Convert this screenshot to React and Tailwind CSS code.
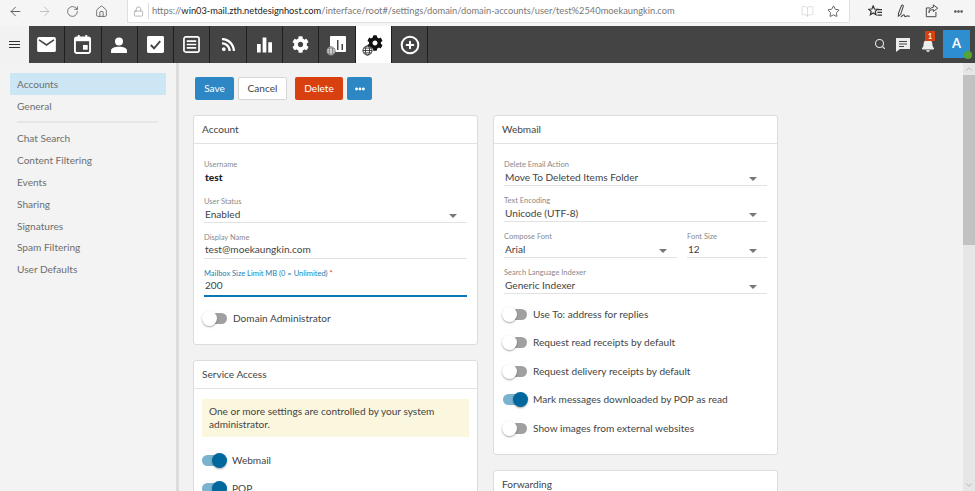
import { ArrowLeft, ArrowRight, RotateCw, Home, Lock, BookOpen, Star, Search, CirclePlus, ChevronUp, ChevronDown } from "lucide-react";
import { FaCog, FaRss, FaBell, FaEllipsisH } from "react-icons/fa";

const FONT = { fontFamily: 'Lato, "Open Sans", sans-serif' };

function Globe({ className }) {
  return (
    <svg viewBox="0 0 12 12" className={className} fill="none" stroke="currentColor" strokeWidth="0.9">
      <circle cx="6" cy="6" r="5" fill="#fff" />
      <ellipse cx="6" cy="6" rx="2.3" ry="5" />
      <path d="M1 6h10M1.8 3.4h8.4M1.8 8.6h8.4" />
    </svg>
  );
}

function MailIcon() {
  return (
    <svg viewBox="0 0 20 16" className="h-[15px] w-[19px]">
      <rect width="20" height="16" rx="2" fill="#fff" />
      <path d="M2 3l8 5.5L18 3" fill="none" stroke="#444" strokeWidth="1.6" />
    </svg>
  );
}

function CalendarIcon() {
  return (
    <svg viewBox="0 0 18 20" className="h-[19px] w-[17px]">
      <path d="M4 0h2v3H4zM12 0h2v3h-2z" fill="#fff" />
      <rect x="1" y="2.5" width="16" height="16.5" rx="2" fill="none" stroke="#fff" strokeWidth="2" />
      <rect x="1" y="2.5" width="16" height="4" fill="#fff" />
      <rect x="9.5" y="10.5" width="5" height="5" fill="#fff" />
    </svg>
  );
}

function PersonIcon() {
  return (
    <svg viewBox="0 0 18 18" className="h-[16px] w-[16px]">
      <circle cx="9" cy="5" r="4.5" fill="#fff" />
      <path d="M0 18v-2.5C0 12.5 4 11 9 11s9 1.500 9 4.500V18z" fill="#fff" />
    </svg>
  );
}

function CheckIcon() {
  return (
    <svg viewBox="0 0 18 18" className="h-[17px] w-[17px]">
      <rect width="18" height="18" rx="1.500" fill="#fff" />
      <path d="M4 9.500l3.500 3.500L14 5.500" fill="none" stroke="#444" strokeWidth="2" />
    </svg>
  );
}

function ListIcon() {
  return (
    <svg viewBox="0 0 18 18" className="h-[17px] w-[17px]">
      <rect x="1" y="1" width="16" height="16" rx="2" fill="none" stroke="#fff" strokeWidth="1.800" />
      <path d="M4 5.500h10M4 9h10M4 12.500h10" stroke="#fff" strokeWidth="1.800" />
    </svg>
  );
}

function BarsIcon() {
  return (
    <svg viewBox="0 0 16 16" className="h-[16px] w-[15px]">
      <path d="M0 7h4v9H0zM6 0h4v16H6zM12 5h4v11h-4z" fill="#fff" />
    </svg>
  );
}

function ReportGlobeIcon() {
  return (
    <span className="relative flex h-[20px] w-[20px] items-center justify-center">
      <svg viewBox="0 0 16 16" className="h-[16px] w-[16px] translate-x-[1px] translate-y-[-1px]">
        <rect width="16" height="16" rx="1" fill="#fff" />
        <path d="M7 4h1.500v10H7zM11.500 8H13v6h-1.500z" fill="#444" />
      </svg>
      <Globe className="absolute bottom-[-1px] left-[-1px] h-[10px] w-[10px] text-[#666]" />
    </span>
  );
}

function DomainGearIcon() {
  return (
    <span className="relative flex h-[20px] w-[20px] items-center justify-center">
      <FaCog className="ml-[3px] mt-[-3px] text-[16px] text-[#111]" />
      <Globe className="absolute bottom-[-1px] left-[-1px] h-[11px] w-[11px] text-[#222]" />
    </span>
  );
}

function FavoritesIcon() {
  return (
    <svg viewBox="0 0 16 14" className="h-[13px] w-[15px]" fill="none" stroke="#333" strokeWidth="1.300">
      <path d="M5.500 1l1.400 3.300 3.500.3-2.700 2.300.8 3.500-3-1.800-3 1.800.8-3.500L.6 4.600l3.500-.3z" />
      <path d="M10.500 5H15M10 8h5M10 11h5" />
    </svg>
  );
}

function PenIcon() {
  return (
    <svg viewBox="0 0 16 16" className="h-[15px] w-[15px]" fill="none" stroke="#444" strokeWidth="1.100">
      <path d="M6 1.500c1-.8 2-.2 1.800 1L5 11l-2.500 2 .2-3.300z" />
      <path d="M5 13.500c2-.5 2.500-2.500 3.500-2 .8.400.2 2 1.200 2s1.500-1 2.500-.8 1.500.5 2.500.3" />
    </svg>
  );
}

function ShareIcon() {
  return (
    <svg viewBox="0 0 16 16" className="h-[14px] w-[14px]" fill="none" stroke="#444" strokeWidth="1.100">
      <path d="M12.500 9v5.500h-11V4.500H6" />
      <path d="M9.500 1l5 3.800-5 3.700V6.300C7 6.300 5.500 7.500 4.500 10c0-4 2-6 5-6.200z" />
    </svg>
  );
}

const TABS = [
  { id: "mail", icon: <MailIcon /> },
  { id: "calendar", icon: <CalendarIcon /> },
  { id: "contacts", icon: <PersonIcon /> },
  { id: "tasks", icon: <CheckIcon /> },
  { id: "notes", icon: <ListIcon /> },
  { id: "rss", icon: <FaRss className="text-[15px] text-white" /> },
  { id: "reports", icon: <BarsIcon /> },
  { id: "settings", icon: <FaCog className="text-[17px] text-white" /> },
  { id: "domain-reports", icon: <ReportGlobeIcon /> },
  { id: "domain-settings", icon: <DomainGearIcon />, active: true },
  { id: "add", icon: <CirclePlus size={20} strokeWidth={2.4} className="text-white" /> },
];

const NAV_TOP = ["General"];
const NAV_BOTTOM = ["Chat Search", "Content Filtering", "Events", "Sharing", "Signatures", "Spam Filtering", "User Defaults"];

function BrowserBar() {
  return (
    <div className="flex h-[26px] items-start bg-[#f5f5f5]">
      <div className="flex h-[22px] w-[127px] items-center text-[#444]">
        <div className="flex w-[30px] justify-center"><ArrowLeft size={15} strokeWidth={1.300} /></div>
        <div className="flex w-[28px] justify-center text-[#b5b5b5]"><ArrowRight size={15} strokeWidth={1.300} /></div>
        <div className="flex w-[28px] justify-center"><RotateCw size={13} strokeWidth={1.300} /></div>
        <div className="flex w-[30px] justify-center"><Home size={13} strokeWidth={1.300} /></div>
      </div>
      <div className="flex h-[23px] w-[723px] items-center rounded-br-[2px] border-x border-b border-[#dfdfdf] bg-white">
        <div className="flex w-[20px] justify-center text-[#888]"><Lock size={11} strokeWidth={1.300} /></div>
        <div className="h-[16px] w-px bg-[#ddd]" />
        <div className="ml-[3px] flex-1 truncate text-[9.3px] text-[#777]">
          https://<span className="text-[#222]">win03-mail.zth.netdesignhost.com</span>/interface/root#/settings/domain/domain-accounts/user/test%2540moekaungkin.com
        </div>
        <BookOpen size={13} strokeWidth={1.200} className="mr-[13px] text-[#cfcfcf]" />
        <Star size={13} strokeWidth={1.400} className="mr-[9px] text-[#333]" />
      </div>
      <div className="flex h-[22px] flex-1 items-center pl-[18px] text-[#444]">
        <FavoritesIcon />
        <span className="ml-[13px]"><PenIcon /></span>
        <span className="ml-[14px]"><ShareIcon /></span>
        <FaEllipsisH className="ml-[15px] text-[9px] text-[#555]" />
      </div>
    </div>
  );
}

function AppHeader() {
  return (
    <div className="flex h-[37px] bg-[#f2f2f2]">
      <div className="flex w-[29px] items-center justify-center">
        <div className="flex h-[7px] w-[11px] flex-col justify-between">
          <div className="h-px bg-[#333]" />
          <div className="h-px bg-[#333]" />
          <div className="h-px bg-[#333]" />
        </div>
      </div>
      <div className="flex flex-1 items-stretch bg-[#444444]">
        {TABS.map((tab) => (
          <div
            key={tab.id}
            className={`flex w-[36.3px] items-center justify-center border-r border-[#1f1f1f] ${tab.active ? "bg-white" : ""}`}
          >
            {tab.icon}
          </div>
        ))}
        <div className="flex-1" />
        <Search size={12} strokeWidth={2.200} className="mt-[12px] text-[#e8e8e8]" />
        <svg viewBox="0 0 14 14" className="ml-[10px] mt-[12px] h-[14px] w-[14px]">
          <path d="M0 0h14v11H4l-4 3z" fill="#ededed" />
          <path d="M3 3.500h8M3 6h8M3 8.500h5" stroke="#444" strokeWidth="1" />
        </svg>
        <div className="relative ml-[11px] mt-[12px] h-[14px] w-[13px]">
          <FaBell className="text-[14px] text-[#ededed]" />
          <div className="absolute left-[4px] top-[-7px] flex h-[10px] w-[10px] items-center justify-center bg-[#d9400f] text-[7px] font-bold text-white">1</div>
        </div>
        <div className="relative ml-[9px] mr-[5px] mt-[4px] flex h-[28px] w-[27px] items-center justify-center bg-[#2d8fd0] text-[13px] font-bold text-white">
          A
          <div className="absolute bottom-[-1px] right-[-2px] h-[8px] w-[8px] rounded-full bg-[#55a630]" />
        </div>
      </div>
    </div>
  );
}

function Sidebar() {
  const item = "flex h-[21.8px] items-center px-[7px] pt-[1px] text-[10.1px] text-[#6e6e6e]";
  return (
    <div className="w-[179px] shrink-0 border-r-[3px] border-[#dcdcdc] bg-[#f3f3f3] pl-[10px] pr-[10px] pt-[10px]">
      <div className={`${item} bg-[#cde6f4]`}>Accounts</div>
      {NAV_TOP.map((name) => (
        <div key={name} className={item}>{name}</div>
      ))}
      <div className="mx-[7px] mb-[5px] mt-[4px] h-[2px] w-[141px] bg-[#e6e6e6]" />
      {NAV_BOTTOM.map((name) => (
        <div key={name} className={item}>{name}</div>
      ))}
    </div>
  );
}

function Card({ title, children }) {
  return (
    <div className="rounded-[3px] border border-[#dcdcdc] bg-white">
      <div className="flex h-[28px] items-center border-b border-[#e2e2e2] px-[8px] text-[10.1px] text-[#444]">{title}</div>
      {children}
    </div>
  );
}

function Field({ label, value, select, focused, required, className = "" }) {
  return (
    <div className={`h-[36px] ${className}`}>
      <div className={`h-[13px] text-[7.5px] leading-[13px] ${focused ? "text-[#1c7fb4]" : "text-[#8a8a8a]"}`}>
        {label}
        {required && <span className="text-[#d9400f]"> *</span>}
      </div>
      <div
        className={`flex items-center pl-px text-[10.1px] text-[#444] ${select ? "" : "pb-[3px]"} ${
          focused ? "h-[17px] border-b-2 border-[#0a78b4]" : "h-[15px] border-b border-[#e2e2e2]"
        }`}
      >
        <span className="flex-1">{value}</span>
        {select && <span className="mr-[10px] mt-[2px] h-0 w-0 border-x-[4px] border-t-[4px] border-x-transparent border-t-[#777]" />}
      </div>
    </div>
  );
}

function Toggle({ label, on }) {
  return (
    <div className="ml-[-1px] flex h-[28.500px] items-center">
      <div className={`relative h-[11px] w-[24px] rounded-full ${on ? "bg-[#7ab3cf]" : "bg-[#a0a0a0]"}`}>
        <div
          className={`absolute top-[-2px] h-[15px] w-[15px] rounded-full shadow-[0_1px_2px_rgba(0,0,0,0.35)] ${
            on ? "right-[-1px] bg-[#00689c]" : "left-[-1px] bg-white"
          }`}
        />
      </div>
      <span className="ml-[6px] text-[10.1px] text-[#444]">{label}</span>
    </div>
  );
}

function Toolbar() {
  const btn = "flex h-[23px] items-center justify-center rounded-[2px] text-[10.1px]";
  return (
    <div className="ml-[2px] flex items-center">
      <div className={`${btn} w-[39px] bg-[#2d87c4] text-white`}>Save</div>
      <div className={`${btn} ml-[4px] w-[49px] border border-[#d5d5d5] bg-white text-[#444]`}>Cancel</div>
      <div className={`${btn} ml-[8px] w-[48px] bg-[#d9400f] text-white`}>Delete</div>
      <div className={`${btn} ml-[4px] w-[25px] bg-[#2d87c4] text-white`}><FaEllipsisH className="text-[10px]" /></div>
    </div>
  );
}

function AccountCard() {
  return (
    <Card title="Account">
      <div className="h-[200px] px-[10px] pt-[14px]">
        <div className="h-[37px]">
          <div className="h-[13px] text-[7.5px] leading-[13px] text-[#8a8a8a]">Username</div>
          <div className="pl-[1px] text-[10.1px] font-black leading-[12px] text-[#222]">test</div>
        </div>
        <Field label="User Status" value="Enabled" select />
        <Field label="Display Name" value="test@moekaungkin.com" />
        <Field label="Mailbox Size Limit MB (0 = Unlimited)" value="200" focused required />
        <div className="mt-[1px]"><Toggle label="Domain Administrator" /></div>
      </div>
    </Card>
  );
}

function ServiceCard() {
  return (
    <Card title="Service Access">
      <div className="px-[8px] pt-[10px]">
        <div className="bg-[#fbf6de] px-[7px] py-[6px] text-[10.1px] leading-[13px] text-[#444]">
          One or more settings are controlled by your system administrator.
        </div>
        <div className="ml-[1px] mt-[9px]"><Toggle label="Webmail" on /></div>
        <div className="ml-[1px]"><Toggle label="POP" on /></div>
      </div>
    </Card>
  );
}

function WebmailCard() {
  return (
    <Card title="Webmail">
      <div className="h-[310px] px-[10px] pt-[14px]">
        <Field label="Delete Email Action" value="Move To Deleted Items Folder" select />
        <Field label="Text Encoding" value="Unicode (UTF-8)" select />
        <div className="flex gap-[10px]">
          <Field label="Compose Font" value="Arial" select className="w-[173px]" />
          <Field label="Font Size" value="12" select className="flex-1" />
        </div>
        <Field label="Search Language Indexer" value="Generic Indexer" select />
        <div className="mt-[-2px]">
          <Toggle label="Use To: address for replies" />
          <Toggle label="Request read receipts by default" />
          <Toggle label="Request delivery receipts by default" />
          <Toggle label="Mark messages downloaded by POP as read" on />
          <Toggle label="Show images from external websites" />
        </div>
      </div>
    </Card>
  );
}

export default function App() {
  return (
    <div className="flex h-[491px] w-[975px] flex-col overflow-hidden bg-[#f2f2f2]" style={FONT}>
      <BrowserBar />
      <AppHeader />
      <div className="flex min-h-0 flex-1">
        <Sidebar />
        <div className="min-w-0 flex-1 overflow-hidden pl-[14px] pt-[14px]">
          <Toolbar />
          <div className="mt-[15px] grid grid-cols-[285px_285px] gap-x-[15px]">
            <div className="flex flex-col gap-[15px]">
              <AccountCard />
              <ServiceCard />
            </div>
            <div className="flex flex-col gap-[15px]">
              <WebmailCard />
              <Card title="Forwarding"><div className="h-[40px]" /></Card>
            </div>
          </div>
        </div>
        <div className="flex w-[12px] shrink-0 flex-col items-center bg-[#e6e6e6]">
          <ChevronUp size={10} strokeWidth={1.500} className="my-[1px] text-[#999]" />
          <div className="h-[170px] w-full bg-[#c2c2c2]" />
          <div className="flex-1" />
          <ChevronDown size={10} strokeWidth={1.500} className="my-[1px] text-[#999]" />
        </div>
      </div>
    </div>
  );
}
